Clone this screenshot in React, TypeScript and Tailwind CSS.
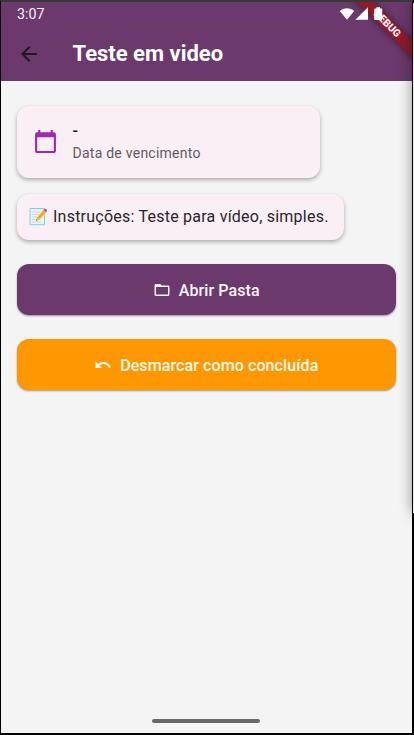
import React from 'react';

function StatusIcons() {
  return (
    <svg width="48" height="16" viewBox="0 0 48 16" fill="#fff">
      <path d="M0.8 5C4.8 1.2 11.2 1.2 15.2 5L8 13.8Z" />
      <path d="M29 1.2V13.8H16.4Z" />
      <path d="M37.4 1.2h3.6v1.4h1.2q1 0 1 1V13q0 1-1 1H36.2q-1 0-1-1V3.6q0-1 1-1h1.2Z" />
    </svg>
  );
}

function DebugBanner() {
  return (
    <div className="pointer-events-none absolute top-0 right-0 z-0 h-[72px] w-[72px] overflow-hidden">
      <div className="absolute top-[16px] -right-[35px] flex h-[12px] w-[120px] rotate-45 items-center justify-center bg-[#8d1b2c] text-[10.4px] leading-none font-black text-[#f5e9ee] shadow-[0_0_6px_rgba(0,0,0,0.5)]">
        DEBUG
      </div>
    </div>
  );
}

function Header() {
  return (
    <header className="relative h-[79px] bg-[#6b396c] text-white">
      <DebugBanner />
      <div className="relative flex h-6 items-center justify-between pl-4 pr-[25px]">
        <span className="text-[14.3px] leading-6 text-[#f4eff4]">3:07</span>
        <StatusIcons />
      </div>
      <div className="relative flex h-[55px] items-center pl-[15.5px]">
        <svg width="24" height="24" viewBox="0 0 24 24" fill="#1d1b20">
          <path d="M20 11H7.83l5.59-5.59L12 4l-8 8 8 8 1.41-1.41L7.83 13H20v-2z" />
        </svg>
        <h1 className="ml-8 text-[22px] leading-7 font-bold">Teste em video</h1>
      </div>
    </header>
  );
}

const cardStyle = 'rounded-xl bg-[#faeff5] shadow-[0_2px_4px_rgba(0,0,0,0.3)]';

function MemoIcon() {
  return (
    <svg width="19" height="19" viewBox="0 0 19 19" className="shrink-0">
      <path d="M1 1.5h14.5v16.2H1z" fill="#e9f3f8" stroke="#82cdf0" strokeWidth="1" />
      <path d="M3 5h8M3 7.5h7M3 10h5M3 12.5h4M3 15h9" stroke="#bdd0da" strokeWidth="0.7" />
      <path d="M7 13.8l1.1-3.6 6-6.9 2.8 2.4-6.1 6.8z" fill="#fbb82a" />
      <path d="M9.3 11.4l5.9-6.9" stroke="#e78a12" strokeWidth="0.9" />
      <path d="M7 13.8l1-3.2 2.2 2z" fill="#e6bd88" />
      <path d="M7 13.8l.5-1.4 1 .8z" fill="#4b3b36" />
      <path d="M14.1 3.3l1.2-1.4q.7-.6 1.7.2t1.1 1.7l-1.2 1.9z" fill="#eb4b60" />
      <path d="M13.6 3.9l.7-.8 2.8 2.4-.7.8z" fill="#a9b9c0" />
    </svg>
  );
}

export default function App() {
  return (
    <div className="relative h-[735px] w-[414px] border-t-2 border-r-2 border-b-2 border-l border-t-[#393939] border-r-black border-b-black border-l-black bg-[#f4f4f4] font-['Roboto',sans-serif]">
      <Header />
      <main className="flex flex-col items-start pt-[24.5px] pr-4 pl-[15.5px]">
        <section className={`flex h-[72px] w-[303.5px] items-center pl-4 ${cardStyle}`}>
          <svg width="25" height="25" viewBox="0 0 24 24" fill="#9c27b0">
            <path d="M20 3h-1V1h-2v2H7V1H5v2H4c-1.1 0-2 .9-2 2v16c0 1.1.9 2 2 2h16c1.1 0 2-.9 2-2V5c0-1.1-.9-2-2-2zm0 18H4V8h16v13z" />
          </svg>
          <div className="ml-[15px] pb-px">
            <p className="text-base leading-6 font-medium tracking-[0.5px] text-[#1d1b20]">-</p>
            <p className="text-[14px] leading-5 tracking-[0.25px] text-[#625a63]">Data de vencimento</p>
          </div>
        </section>
        <section className={`mt-4 flex h-[46.5px] w-[327.5px] items-center pl-[12.5px] ${cardStyle}`}>
          <MemoIcon />
          <p className="ml-[5px] pt-px text-base leading-6 tracking-[0.23px] whitespace-nowrap text-[#2a252c]">
            Instruções: Teste para vídeo, simples.
          </p>
        </section>
        <button className="mt-6 flex h-[51px] w-full items-center justify-center gap-2 rounded-xl bg-[#6b396c] pt-px text-base font-medium tracking-[0.1px] text-[#faf5fa] shadow-[0_1px_2px_rgba(0,0,0,0.4)]">
          <svg width="18" height="18" viewBox="0 0 24 24" fill="currentColor">
            <path d="M20 6h-8l-2-2H4c-1.1 0-2 .9-2 2v12c0 1.1.9 2 2 2h16c1.1 0 2-.9 2-2V8c0-1.1-.9-2-2-2zm0 12H4V8h16v10z" />
          </svg>
          <span className="pt-px">Abrir Pasta</span>
        </button>
        <button className="mt-6 flex h-[51px] w-full items-center justify-center gap-2 rounded-xl bg-[#ff9800] pt-px text-base font-medium tracking-[0.1px] text-[#fffaf0] shadow-[0_1px_2px_rgba(0,0,0,0.4)]">
          <svg width="18" height="18" viewBox="0 0 24 24" fill="currentColor">
            <path d="M12.5 8c-2.65 0-5.05.99-6.9 2.6L2 7v9h9l-3.62-3.62c1.39-1.16 3.16-1.88 5.12-1.88 3.54 0 6.55 2.31 7.6 5.5l2.37-.78C21.08 11.03 17.15 8 12.5 8z" />
          </svg>
          <span className="pt-px">Desmarcar como concluída</span>
        </button>
      </main>
      <div className="absolute top-[716.5px] left-[151px] h-1 w-[108px] rounded-full bg-[#696969]" />
      <div className="pointer-events-none absolute inset-y-0 right-0 w-6 overflow-hidden">
        <div className="absolute top-0 -right-5 h-[511px] w-5 shadow-[0_0_14px_rgba(0,0,0,0.38)]" />
      </div>
      <div className="absolute top-[1px] -right-[2px] h-[510px] w-px bg-[#eeeeee]" />
    </div>
  );
}
